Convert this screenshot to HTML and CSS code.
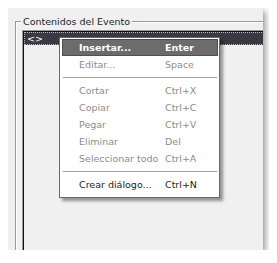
FILE: index.html
```html
<!DOCTYPE html>
<html>
  <head>
    <meta charset="utf-8" />
    <title>Contenidos del Evento</title>
    <link rel="stylesheet" href="styles.css">
  </head>
  <body>
    <div class="shot">
      <fieldset class="group">
        <legend>Contenidos del Evento</legend>
        <div class="list">
          <div class="row sel">&lt;&gt;</div>
        </div>
      </fieldset>
      <div class="menu">
        <div class="item hot"><span>Insertar...</span><span>Enter</span></div>
        <div class="item off"><span>Editar...</span><span>Space</span></div>
        <div class="sep"></div>
        <div class="item off"><span>Cortar</span><span>Ctrl+X</span></div>
        <div class="item off"><span>Copiar</span><span>Ctrl+C</span></div>
        <div class="item off"><span>Pegar</span><span>Ctrl+V</span></div>
        <div class="item off"><span>Eliminar</span><span>Del</span></div>
        <div class="item off"><span>Seleccionar todo</span><span>Ctrl+A</span></div>
        <div class="sep"></div>
        <div class="item"><span>Crear diálogo...</span><span>Ctrl+N</span></div>
      </div>
    </div>
  </body>
</html>
```

FILE: styles.css
```css
html, body {
    background: #fff;
    font-family: 'DejaVu Sans', Verdana, sans-serif;
    font-size: 9.5px;
    color: #1e1e1e;
}
body {
    margin: 8px;
}
.shot {
    position: relative;
    width: 255px;
    height: 242px;
    overflow: hidden;
    background: #f0f0f0;
    box-shadow: 2px 3px 7px rgba(0, 0, 0, 0.45);
}
.group {
    margin: 7px 0 0 7px;
    padding: 0;
    width: 270px;
    height: 260px;
    border: 1px solid #9a9a9a;
    box-shadow: inset 1px 1px 0 #fff;
}
.group legend {
    margin-left: 5px;
    padding: 0 2px;
    line-height: 13px;
    background: #f0f0f0;
}
.list {
    margin: 2px 0 0 6px;
    padding-top: 1px;
    height: 240px;
    border-top: 1px solid #9a9a9a;
    border-left: 1px solid #9a9a9a;
    box-shadow: inset 1px 1px 0 #101010;
    background: #f0f0f0;
}
.row {
    margin-left: 1px;
    height: 13px;
    line-height: 13px;
    padding-left: 3px;
}
.row.sel {
    background: #3a3a44;
    color: #fff;
    outline: 1px dotted #b8b8b8;
    outline-offset: -1px;
}
.menu {
    position: absolute;
    left: 51px;
    top: 29px;
    width: 161px;
    box-sizing: border-box;
    padding: 1px 1px 4px 2px;
    background: #fff;
    border: 1px solid #6a6a6a;
    box-shadow: 3px 3px 3px rgba(0, 0, 0, 0.4);
}
.item {
    display: grid;
    grid-template-columns: 86px 1fr;
    height: 17px;
    line-height: 17px;
    padding-left: 17px;
}
.item.off {
    color: #8c8c8c;
}
.item.hot {
    background: #6c6c6c;
    color: #fff;
    font-weight: bold;
    box-shadow: inset 0 0 0 1px #505050;
}
.sep {
    margin: 4px 1px 4px 1px;
    border-top: 1px solid #a0a0a0;
}
```
